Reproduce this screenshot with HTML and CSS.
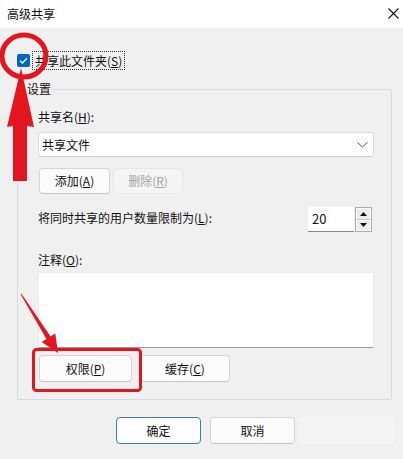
FILE: index.html
```html
<!DOCTYPE html>
<html lang="zh-CN">
<head>
<meta charset="utf-8">
<title>高级共享</title>
<link rel="stylesheet" href="styles.css">
</head>
<body>
<div class="dialog">
  <div class="titlebar">
    <span class="title">高级共享</span>
    <svg class="close" width="11" height="11" viewBox="0 0 11 11"><path d="M0.5 0.5 L10.5 10.5 M10.5 0.5 L0.5 10.5" stroke="#111" stroke-width="1.1" fill="none"/></svg>
  </div>
  <div class="content">
    <div class="checkrow">
      <span class="checkbox"><svg width="13" height="13" viewBox="0 0 13 13"><path d="M3 6.8 L5.4 9 L10 4.2" stroke="#fff" stroke-width="1.3" fill="none"/></svg></span>
      <span class="checklabel">共享此文件夹(<u>S</u>)</span>
    </div>
    <fieldset class="group">
      <legend class="legend">设置</legend>
      <div class="group-inner">
        <div class="label">共享名(<u>H</u>):</div>
        <div class="combo">
          <span>共享文件</span>
          <svg width="11" height="6" viewBox="0 0 11 6"><path d="M0.5 0.5 L5.5 5 L10.5 0.5" stroke="#555" stroke-width="1" fill="none"/></svg>
        </div>
        <div class="btnrow small">
          <button class="btn add">添加(<u>A</u>)</button>
          <button class="btn del" disabled>删除(<u>R</u>)</button>
        </div>
        <div class="limitrow">
          <span class="limit-label">将同时共享的用户数量限制为(<u>L</u>):</span>
          <div class="spinner">
            <div class="spin-input">20</div>
            <div class="spin-btns">
              <div class="spin-up"><svg width="7" height="4" viewBox="0 0 7 4"><path d="M0 4 L3.5 0 L7 4 Z" fill="#111"/></svg></div>
              <div class="spin-down"><svg width="7" height="4" viewBox="0 0 7 4"><path d="M0 0 L3.5 4 L7 0 Z" fill="#111"/></svg></div>
            </div>
          </div>
        </div>
        <div class="label comment-label">注释(<u>O</u>):</div>
        <div class="textarea"></div>
        <div class="btnrow perm">
          <button class="btn wide1">权限(<u>P</u>)</button>
          <button class="btn wide2">缓存(<u>C</u>)</button>
        </div>
      </div>
    </fieldset>
    <div class="footer">
      <button class="btn foot default">确定</button>
      <button class="btn foot">取消</button>
      <div class="ghost"></div>
    </div>
  </div>
  <svg class="annot" width="403" height="459" viewBox="0 0 403 459">
    <ellipse cx="24" cy="56" rx="22" ry="21" stroke="#e3161f" stroke-width="5" fill="none"/>
    <path d="M21 68 L34 127 L27 126 L27 181 L13 181 L13 126 L7 127 Z" fill="#e3161f"/>
    <path d="M20.6 294.3 L21.4 293.7 L50.6 336.4 L55.3 333.5 L58 353 L41.7 341.9 L46.4 339 Z" fill="#e3161f"/>
    <rect x="33.5" y="349.5" width="107" height="41" rx="3" stroke="#e3161f" stroke-width="3" fill="none"/>
  </svg>
</div>
</body>
</html>
```

FILE: styles.css
```css
* { box-sizing: border-box; }
html, body { margin: 0; padding: 0; }
body {
  width: 403px;
  height: 459px;
  overflow: hidden;
  background: #f0f0f0;
  font-family: "Noto Sans CJK SC", "Microsoft YaHei", sans-serif;
  font-size: 12px;
  color: #111;
}
u { text-decoration: underline; text-underline-offset: 1px; }
.dialog { position: relative; width: 403px; height: 459px; }
.titlebar {
  height: 28px;
  background: #fff;
  display: flex;
  align-items: center;
  justify-content: space-between;
  padding: 0 4px 1px 7px;
}
.title { font-size: 12px; line-height: 16px; }
.close { display: block; margin-top: -1px; }
.content { padding-top: 23px; }
.checkrow { display: flex; align-items: center; height: 19px; padding-left: 17px; }
.checkbox {
  width: 13px; height: 13px;
  background: #0067c0;
  border-radius: 2px;
  display: block;
}
.checkbox svg { display: block; }
.checklabel {
  margin-left: 2px;
  border: 1px dotted #333;
  line-height: 17px;
  padding: 0 2px 0 2px;
}
.group {
  margin: 11px 11px 0 17px;
  padding: 0;
  border: 1px solid #dadada;
  border-radius: 2px;
  min-width: 0;
}
.legend { margin-left: 7px; padding: 0 2px; line-height: 16px; font-size: 12px; }
.group-inner { padding: 12px 17px 17px 20px; }
.label { line-height: 16px; }
.combo {
  margin-top: 7px;
  height: 25px;
  background: #fff;
  border: 1px solid #dcdcdc;
  border-bottom-color: #cfcfcf;
  border-radius: 3px;
  display: flex;
  align-items: center;
  justify-content: space-between;
  padding: 0 5px 0 3px;
}
.combo svg { display: block; }
.btnrow { display: flex; }
.small { margin-top: 11px; gap: 3px; padding-left: 1px; }
.btn {
  font-family: inherit;
  font-size: 12px;
  color: #111;
  background: #fbfbfb;
  border: 1px solid #d5d5d5;
  border-bottom-color: #c4c4c4;
  border-radius: 4px;
  padding: 0;
  height: 26px;
  line-height: 16px;
}
.add { width: 71px; }
.del { width: 70px; background: #f5f5f5; border-color: #e6e6e6; color: #a3a3a3; }
.limitrow {
  margin-top: 13px;
  display: flex;
  align-items: center;
  justify-content: space-between;
  height: 25px;
}
.limit-label { line-height: 16px; margin-bottom: 3px; }
.spinner { display: flex; margin-right: 2px; height: 25px; }
.spin-input {
  width: 46px;
  background: #fff;
  border-bottom: 1px solid #8c8c8c;
  padding: 3px 0 0 4px;
  font-size: 13px;
  line-height: 18px;
}
.spin-btns {
  margin-left: 1px;
  width: 17px;
  border: 1px solid #adadad;
  background: #ededed;
  display: flex;
  flex-direction: column;
}
.spin-up, .spin-down {
  flex: 1;
  display: flex;
  align-items: center;
  justify-content: center;
  border: 1px solid #fbfbfb;
}
.spin-up { border-bottom: 1px solid #c8c8c8; }
.spin-up svg, .spin-down svg { display: block; }
.comment-label { margin-top: 20px; }
.textarea {
  margin-top: 4px;
  height: 76px;
  background: #fff;
  border: 1px solid #ececec;
  border-bottom-color: #9a9a9a;
}
.perm { margin-top: 7px; gap: 8px; padding-left: 1px; }
.perm .btn { height: 27px; }
.wide1 { width: 93px; }
.wide2 { width: 90px; }
.footer { display: flex; gap: 9px; margin-top: 17px; padding-left: 116px; }
.foot { width: 85px; height: 27px; }
.default { border: 1px solid #3b7cb4; background: #fdfdfd; }
.ghost { width: 95px; height: 27px; margin-left: -5px; background: #f4f4f4; border-radius: 3px; }
.annot { position: absolute; left: 0; top: 0; pointer-events: none; }
```
